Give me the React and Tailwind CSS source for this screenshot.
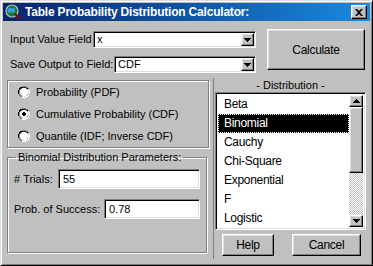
import React from "react";

const raised =
  "border border-t-white border-l-white border-r-black border-b-black shadow-[inset_-1px_-1px_#808080,inset_1px_1px_#dfdfdf]";
const sunken =
  "border border-t-[#808080] border-l-[#808080] border-r-white border-b-white shadow-[inset_1px_1px_#000,inset_-1px_-1px_#dfdfdf]";

function Arrow({ up }) {
  return (
    <svg width="7" height="4" viewBox="0 0 7 4">
      {up ? (
        <path d="M3 0h1v1h1v1h1v1h1v1H0V3h1V2h1V1h1z" fill="#000" />
      ) : (
        <path d="M0 0h7v1H6v1H5v1H4v1H3V3H2V2H1V1H0z" fill="#000" />
      )}
    </svg>
  );
}

function Combo({ w, value }) {
  return (
    <div className={`${sunken} bg-white h-[17px] flex items-center ${w}`}>
      <span className="flex-1 pl-[3px] text-[11px] leading-none text-black">{value}</span>
      <div className={`${raised} bg-[#c0c0c0] w-[13px] h-[13px] mr-[1px] flex items-center justify-center`}>
        <Arrow />
      </div>
    </div>
  );
}

function Radio({ checked, label }) {
  return (
    <div className="flex items-center h-[22px]">
      <svg width="12" height="12" viewBox="0 0 12 12" className="ml-[10px] mr-[6px]">
        <path d="M4 0h4v1h2v1h1v2h1v4h-1v2h-1v1h-2v1H4v-1H2v-1H1V8H0V4h1V2h1V1h2z" fill="#808080" />
        <path d="M12 4v4h-1v2h-1v1H8v1H4v-1h4v-1h2V8h1V4z" fill="#fff" />
        <path d="M4 1h4v1h2v1h-2V2H4v1H2v1H1V8H0V4h1V2h1V1z" fill="#000" />
        <circle cx="6" cy="6" r="4.2" fill="#fff" />
        <path d="M10 3h1v1h-1zM11 4v4h-1v2H8v1H4v-1h4v-1h2V8h0V4z" fill="#dfdfdf" />
        {checked && <path d="M5 4h2v1h1v2H7v1H5V7H4V5h1z" fill="#000" />}
      </svg>
      <span>{label}</span>
    </div>
  );
}

function Globe() {
  return (
    <svg width="16" height="16" viewBox="0 0 16 16">
      <circle cx="7" cy="7" r="6" fill="#1a7a2a" stroke="#c0c0c0" strokeWidth="1.2" />
      <path d="M3 5c2-2 4 0 5-1s2 1 2 3-2 2-3 1-2 2-3 1-2-2-1-4z" fill="#2e9ee8" />
      <path d="M10.5 10.5l4 4" stroke="#7a1010" strokeWidth="2.4" strokeLinecap="round" />
    </svg>
  );
}

export default function App() {
  const items = ["Beta", "Binomial", "Cauchy", "Chi-Square", "Exponential", "F", "Logistic"];
  return (
    <div
      className="w-[373px] h-[266px] bg-[#c0c0c0] border border-t-[#dfdfdf] border-l-[#dfdfdf] border-r-black border-b-black shadow-[inset_1px_1px_#fff,inset_-1px_-1px_#808080] p-[2px] flex flex-col text-[11px] text-black overflow-hidden"
      style={{ fontFamily: '"Liberation Sans", Arial, sans-serif' }}
    >
      {/* Title bar */}
      <div className="h-[18px] bg-linear-to-r from-[#0a246a] to-[#1a8ae0] flex items-center pl-[2px] pr-[3px]">
        <Globe />
        <span className="ml-[4px] text-white font-bold text-[12px] tracking-[-0.2px] leading-none flex-1">
          Table Probability Distribution Calculator:
        </span>
        <div className={`${raised} bg-[#c0c0c0] w-[16px] h-[14px] flex items-center justify-center`}>
          <svg width="8" height="7" viewBox="0 0 8 7">
            <path d="M0 0h2l2 2 2-2h2L5 3.5 8 7H6L4 5 2 7H0l3-3.5z" fill="#000" />
          </svg>
        </div>
      </div>

      {/* Top section */}
      <div className="h-[57px] flex">
        <div className="w-[253px] pl-[7px] pt-[10px] flex flex-col gap-[8px]">
          <div className="flex items-center">
            <span className="w-[83px]">Input Value Field</span>
            <Combo w="w-[163px]" value="x" />
          </div>
          <div className="flex items-center">
            <span className="w-[104px]">Save Output to Field:</span>
            <Combo w="w-[142px]" value="CDF" />
          </div>
        </div>
        <div
          className={`${raised} bg-[#c0c0c0] ml-[11px] mt-[8px] w-[98px] h-[41px] flex items-center justify-center text-[12px] tracking-[-0.3px]`}
        >
          Calculate
        </div>
      </div>

      {/* Bottom section */}
      <div className="flex flex-1">
        <div className="w-[211px] h-[181px] pl-[4px] pr-[4px] flex flex-col border-r border-r-[#808080]">
          <div className="mt-[2px] h-[68px] border border-[#808080] shadow-[inset_1px_1px_#fff,1px_1px_#fff] flex flex-col justify-center">
            <Radio label="Probability (PDF)" />
            <Radio checked label="Cumulative Probability (CDF)" />
            <Radio label="Quantile (IDF; Inverse CDF)" />
          </div>
          <fieldset className="mt-[3px] mr-[2px] h-[102px] border border-[#808080] shadow-[inset_1px_1px_#fff,1px_1px_#fff] px-[6px]">
            <legend className="ml-[2px] px-[2px] leading-[12px]">Binomial Distribution Parameters:</legend>
            <div className="flex items-center mt-[6px]">
              <span className="w-[44px]">#&nbsp;Trials:</span>
              <div className={`${sunken} bg-white w-[142px] h-[20px] pl-[4px] flex items-center`}>55</div>
            </div>
            <div className="flex items-center mt-[10px]">
              <span className="w-[90px]">Prob. of Success:</span>
              <div className={`${sunken} bg-white w-[96px] h-[20px] pl-[4px] flex items-center`}>0.78</div>
            </div>
          </fieldset>
        </div>

        <div className="w-[151px] ml-[1px] flex flex-col">
          <div className="h-[14px] text-center leading-[14px]">- Distribution -</div>
          <div className={`${sunken} bg-white h-[138px] flex p-[2px]`}>
            <div className="flex-1 flex flex-col text-[12px] tracking-[-0.3px]">
              {items.map((it) =>
                it === "Binomial" ? (
                  <div key={it} className="h-[19px] bg-black text-white pl-[5px] flex items-center border border-dotted border-white">
                    {it}
                  </div>
                ) : (
                  <div key={it} className="h-[20px] pl-[6px] flex items-center">
                    {it}
                  </div>
                )
              )}
            </div>
            <div className="w-[14px] flex flex-col">
              <div className={`${raised} bg-[#c0c0c0] h-[12px] flex items-center justify-center`}>
                <Arrow up />
              </div>
              <div className={`${raised} bg-[#c0c0c0] h-[66px]`} />
              <div className="flex-1 bg-[repeating-conic-gradient(#c0c0c0_0_25%,#fff_0_50%)] bg-[length:2px_2px]" />
              <div className={`${raised} bg-[#c0c0c0] h-[12px] flex items-center justify-center`}>
                <Arrow />
              </div>
            </div>
          </div>
          <div className="flex mt-[4px] gap-[18px] pl-[7px] text-[12px] tracking-[-0.3px]">
            <div className={`${raised} bg-[#c0c0c0] w-[52px] h-[22px] flex items-center justify-center`}>Help</div>
            <div className={`${raised} bg-[#c0c0c0] w-[69px] h-[22px] flex items-center justify-center`}>Cancel</div>
          </div>
        </div>
      </div>
    </div>
  );
}
